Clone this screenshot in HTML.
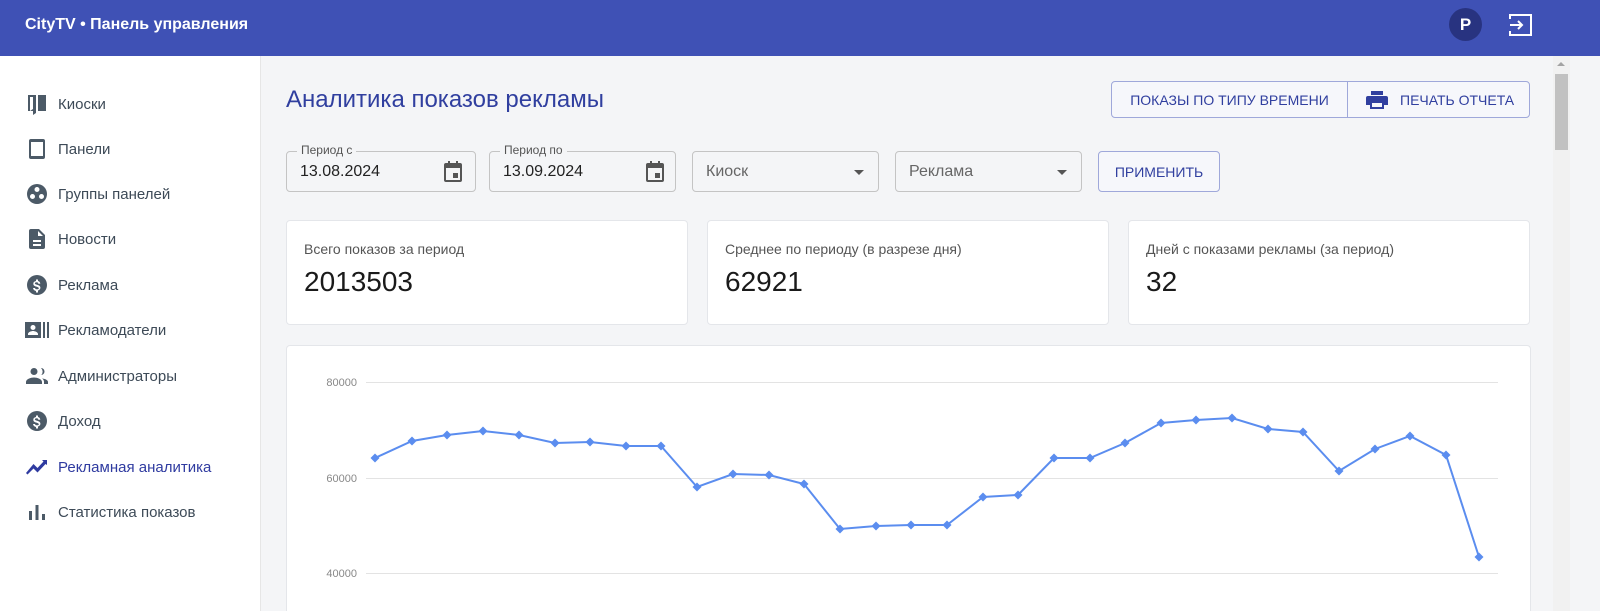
<!DOCTYPE html>
<html style="overflow:hidden;width:1600px;height:611px"><head><meta charset="utf-8"><style>
*{box-sizing:border-box;margin:0;padding:0}
html,body{overflow:hidden}
body{width:1600px;height:611px;background:#f4f5f7;font-family:"Liberation Sans",Roboto,sans-serif;position:relative}
.top{position:absolute;left:0;top:0;width:1600px;height:56px;background:#3f51b5}
.top .t{position:absolute;left:25px;top:16px;color:#fff;font-weight:bold;font-size:16px}
.av{position:absolute;left:1449px;top:8px;width:33px;height:33px;border-radius:50%;background:#283380;color:#fff;font-weight:bold;font-size:17px;text-align:center;line-height:33px}
.side{position:absolute;left:0;top:56px;width:261px;height:555px;background:#fff;border-right:1px solid #e6e6e6}
.it{position:absolute;left:25px;height:24px;display:flex;align-items:center;font-size:15px;color:#3d4a57}
.it svg{width:24px;height:24px;margin-right:9px;fill:#4c5a67}
.it.a{color:#2f3ba0}.it.a svg{fill:#2f3ba0}
h1{position:absolute;left:286px;top:86px;font-size:24px;font-weight:normal;color:#303f9f}
.bg{position:absolute;top:81px;height:37px;border:1px solid #9fa8da;background:#f6f7fb;color:#303f9f;font-size:14px;display:flex;align-items:center}
.f{position:absolute;top:151px;height:41px;border:1px solid #c4c4c4;border-radius:4px;background:#f4f5f7;font-size:16px;color:#222}
.f .l{position:absolute;left:10px;top:-9px;background:#f4f5f7;padding:0 4px;font-size:12px;color:#555}
.f .v{position:absolute;left:13px;top:11px}
.card{position:absolute;background:#fff;border:1px solid #e4e6ea;border-radius:4px}
.card .a{position:absolute;left:17px;top:20px;font-size:14px;color:#555}
.card .b{position:absolute;left:17px;top:45px;font-size:28px;color:#1a1a1a}
</style></head><body>
<div class="top"><div class="t">CityTV • Панель управления</div><div class="av">P</div>
<svg style="position:absolute;left:1508px;top:12px" width="26" height="26" viewBox="0 0 26 26" fill="none" stroke="#fff" stroke-width="2"><path d="M2 7V3h21v20H2v-4"/><path d="M2 13h12M10 9l4 4-4 4"/></svg></div>
<div class="side">
<div class="it" style="top:36px"><svg viewBox="0 0 24 24"><path d="M3 3h8v18l-3 2V5H5v14l3-2v2H3zM13 3h8v16h-8zM15 12l3-2v6l-3 2z"/></svg>Киоски</div>
<div class="it" style="top:81px"><svg viewBox="0 0 24 24"><path d="M6 2h12a2 2 0 0 1 2 2v16a2 2 0 0 1-2 2H6a2 2 0 0 1-2-2V4a2 2 0 0 1 2-2zm0 3v14h12V5z"/></svg>Панели</div>
<div class="it" style="top:126px"><svg viewBox="0 0 24 24"><path d="M12 2a10 10 0 1 0 0 20 10 10 0 0 0 0-20zm0 3a2.5 2.5 0 1 1 0 5 2.5 2.5 0 0 1 0-5zM7.5 12a2.5 2.5 0 1 1 0 5 2.5 2.5 0 0 1 0-5zm9 0a2.5 2.5 0 1 1 0 5 2.5 2.5 0 0 1 0-5z"/></svg>Группы панелей</div>
<div class="it" style="top:171px"><svg viewBox="0 0 24 24"><path d="M6 2h8l6 6v12a2 2 0 0 1-2 2H6a2 2 0 0 1-2-2V4a2 2 0 0 1 2-2zm2 11v2h8v-2zm0 4v2h8v-2zm5-13v5h5z"/></svg>Новости</div>
<div class="it" style="top:217px"><svg viewBox="0 0 24 24"><path d="M12 2a10 10 0 1 0 0 20 10 10 0 0 0 0-20zm1 16v1.5h-2V18c-1.5-.3-2.8-1.3-3-3h2c.1.8.8 1.3 2 1.3 1.4 0 1.8-.6 1.8-1.1 0-.6-.4-1-2-1.5-2-.5-3.5-1.2-3.5-3 0-1.5 1.2-2.4 2.7-2.7V6.5h2V8c1.5.4 2.2 1.5 2.3 2.7h-2c0-.8-.5-1.400-1.7-1.4-1.1 0-1.7.5-1.7 1.1 0 .6.5.9 2 1.3 1.6.4 3.5 1 3.5 3.1 0 1.5-1.1 2.4-2.4 2.7z"/></svg>Реклама</div>
<div class="it" style="top:262px"><svg viewBox="0 0 24 24"><path d="M0 4h16v16H0zm8 3a2.5 2.5 0 1 0 0 5 2.5 2.5 0 0 0 0-5zm-5 10h10v-1c0-2-3.5-3-5-3s-5 1-5 3zM18 4h2v16h-2zM22 4h2v16h-2z"/></svg>Рекламодатели</div>
<div class="it" style="top:308px"><svg viewBox="0 0 24 24"><path d="M9 4a3.5 3.5 0 1 1 0 7 3.5 3.5 0 0 1 0-7zm7 0a3.5 3.5 0 1 1 0 7c-.5 0 0 0 .5-.2A5 5 0 0 0 16 4zM1 20v-2c0-3 5-4.5 8-4.5s8 1.5 8 4.5v2zm18 0v-2c0-1.6-.8-2.8-2-3.6 3 .4 6 1.6 6 3.6v2z"/></svg>Администраторы</div>
<div class="it" style="top:353px"><svg viewBox="0 0 24 24"><path d="M12 2a10 10 0 1 0 0 20 10 10 0 0 0 0-20zm1 16v1.5h-2V18c-1.5-.3-2.8-1.3-3-3h2c.1.8.8 1.3 2 1.3 1.4 0 1.8-.6 1.8-1.1 0-.6-.4-1-2-1.5-2-.5-3.5-1.2-3.5-3 0-1.5 1.2-2.4 2.7-2.7V6.5h2V8c1.5.4 2.2 1.5 2.3 2.7h-2c0-.8-.5-1.4-1.7-1.4-1.1 0-1.7.5-1.7 1.1 0 .6.5.9 2 1.3 1.6.4 3.5 1 3.5 3.1 0 1.5-1.1 2.4-2.4 2.7z"/></svg>Доход</div>
<div class="it a" style="top:399px"><svg viewBox="0 0 24 24"><path d="M1 18l1.5 1.5 6-6 4 4 8-8.5L22 10V5h-5l1.5 1.5-6 6.5-4-4z"/></svg>Рекламная аналитика</div>
<div class="it" style="top:444px"><svg viewBox="0 0 24 24"><path d="M4 11h3v9H4zM10.5 5h3v15h-3zM17 14h3v6h-3z"/></svg>Статистика показов</div>
</div>
<h1>Аналитика показов рекламы</h1>
<div class="bg" style="left:1111px;width:237px;border-radius:4px 0 0 4px;justify-content:center">ПОКАЗЫ ПО ТИПУ ВРЕМЕНИ</div>
<div class="bg" style="left:1347px;width:183px;border-radius:0 4px 4px 0;padding-left:17px"><svg width="24" height="24" viewBox="0 0 24 24" fill="#303f9f" style="margin-right:11px"><path d="M6 3h12v4H6zM3 8h18a2 2 0 0 1 2 2v7h-4v4H5v-4H1v-7a2 2 0 0 1 2-2zm4 7v4h10v-4z"/></svg>ПЕЧАТЬ ОТЧЕТА</div>
<div class="f" style="left:286px;width:190px"><div class="l">Период с</div><div class="v">13.08.2024</div><svg style="position:absolute;right:10px;top:8px" width="24" height="24" viewBox="0 0 24 24" fill="#555"><path d="M7 1h2v2h6V1h2v2h2a2 2 0 0 1 2 2v15a2 2 0 0 1-2 2H5a2 2 0 0 1-2-2V5a2 2 0 0 1 2-2h2zM5 8v12h14V8zm7 5h5v5h-5z"/></svg></div>
<div class="f" style="left:489px;width:187px"><div class="l">Период по</div><div class="v">13.09.2024</div><svg style="position:absolute;right:8px;top:8px" width="24" height="24" viewBox="0 0 24 24" fill="#555"><path d="M7 1h2v2h6V1h2v2h2a2 2 0 0 1 2 2v15a2 2 0 0 1-2 2H5a2 2 0 0 1-2-2V5a2 2 0 0 1 2-2h2zM5 8v12h14V8zm7 5h5v5h-5z"/></svg></div>
<div class="f" style="left:692px;width:187px"><div class="v" style="color:#666">Киоск</div><div style="position:absolute;right:14px;top:18px;border:5px solid transparent;border-top-color:#555"></div></div>
<div class="f" style="left:895px;width:187px"><div class="v" style="color:#666">Реклама</div><div style="position:absolute;right:14px;top:18px;border:5px solid transparent;border-top-color:#555"></div></div>
<div class="bg" style="left:1098px;top:151px;height:41px;width:122px;border-radius:4px;justify-content:center">ПРИМЕНИТЬ</div>
<div class="card" style="left:286px;top:220px;width:402px;height:105px"><div class="a">Всего показов за период</div><div class="b">2013503</div></div>
<div class="card" style="left:707px;top:220px;width:402px;height:105px"><div class="a">Среднее по периоду (в разрезе дня)</div><div class="b">62921</div></div>
<div class="card" style="left:1128px;top:220px;width:402px;height:105px"><div class="a">Дней с показами рекламы (за период)</div><div class="b">32</div></div>
<div class="card" style="left:286px;top:345px;width:1245px;height:266px;border-bottom:none;border-radius:4px 4px 0 0"></div>
<svg style="position:absolute;left:0;top:0" width="1600" height="611">
<g stroke="#e3e3e3" stroke-width="1"><path d="M366 382.5H1498M366 478.5H1498M366 573.5H1498"/></g>
<g font-size="11" fill="#888" text-anchor="end" font-family="Liberation Sans"><text x="357" y="386">80000</text><text x="357" y="482">60000</text><text x="357" y="577">40000</text></g>
<polyline fill="none" stroke="#5b8def" stroke-width="2" points="375,458 412,441 447,435 483,431 519,435 555,443 590,442 626,446 661,446 697,487 733,474 769,475 804,484 840,529 876,526 911,525 947,525 983,497 1018,495 1054,458 1090,458 1125,443 1161,423 1196,420 1232,418 1268,429 1303,432 1339,471 1375,449 1410,436 1446,455 1479,557"/>
<g fill="#5b8def" id="m"></g>
</svg>
<div style="position:absolute;left:1553px;top:56px;width:17px;height:555px;background:#f1f1f1"><div style="position:absolute;left:2px;top:18px;width:13px;height:76px;background:#c1c1c1"></div><div style="position:absolute;left:4px;top:6px;border:4px solid transparent;border-bottom-color:#a3a3a3;border-top:0"></div></div>
<script>
var p="375,458 412,441 447,435 483,431 519,435 555,443 590,442 626,446 661,446 697,487 733,474 769,475 804,484 840,529 876,526 911,525 947,525 983,497 1018,495 1054,458 1090,458 1125,443 1161,423 1196,420 1232,418 1268,429 1303,432 1339,471 1375,449 1410,436 1446,455 1479,557".split(" ");
var g=document.getElementById("m"),s="";
p.forEach(function(q){var a=q.split(",");var x=+a[0],y=+a[1];s+='<path d="M'+x+' '+(y-4.5)+'L'+(x+4.5)+' '+y+'L'+x+' '+(y+4.5)+'L'+(x-4.5)+' '+y+'Z"/>';});
g.innerHTML=s;
</script>
</body></html>
